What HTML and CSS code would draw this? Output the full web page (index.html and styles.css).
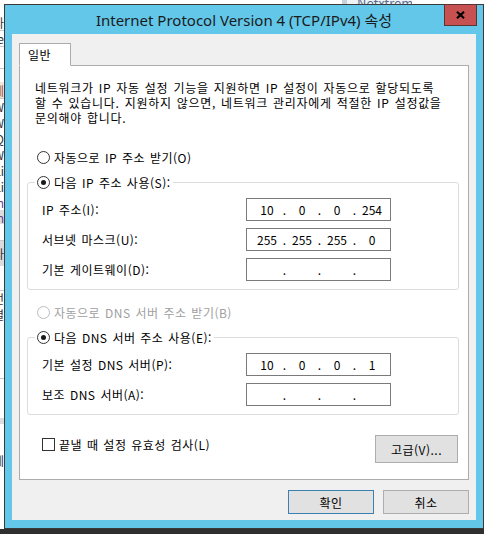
FILE: index.html
```html
<!DOCTYPE html>
<html lang="ko">

<head>
    <meta charset="UTF-8">
    <meta name="viewport" content="width=device-width, initial-scale=1.0">
    <title>Internet Protocol Version 4 (TCP/IPv4) 속성</title>
    <link rel="stylesheet" href="styles.css">
</head>

<body>
    <div class="screen">
        <!-- bits of the windows behind the dialog -->
        <div class="desk-top">
            <span class="desk-gap"></span>
            <span class="desk-chip">Netxtrem</span>
        </div>
        <div class="desk-left">
            <div class="frag h14"></div>
            <div class="frag h16">사</div>
            <div class="frag h16 line">re</div>
            <div class="frag h22 line"></div>
            <div class="frag h14 line"></div>
            <div class="frag h16 brown">세</div>
            <div class="frag h16 line">W</div>
            <div class="frag h16">W</div>
            <div class="frag h16">Q</div>
            <div class="frag h16">W</div>
            <div class="frag h16">Li</div>
            <div class="frag h16">Li</div>
            <div class="frag h16 purple">m</div>
            <div class="frag h14 grey purple">m</div>
            <div class="frag h16"></div>
            <div class="frag h26 grey line">사</div>
            <div class="frag h24"></div>
            <div class="frag h16 line">전</div>
            <div class="frag h16">결</div>
            <div class="frag h56"></div>
            <div class="frag h40 line"></div>
            <div class="frag h6 grey"></div>
            <div class="frag h28"></div>
            <div class="frag h16">세</div>
        </div>

        <div class="window">
            <div class="titlebar">
                <span></span>
                <span class="title">Internet Protocol Version 4 (TCP/IPv4) 속성</span>
                <button class="close" type="button">
                    <svg width="9" height="8" viewBox="0 0 9 8">
                        <path d="M1 0.8 L8 7.2 M8 0.8 L1 7.2" stroke="#000" stroke-width="2.2" fill="none" />
                    </svg>
                </button>
            </div>

            <div class="client">
                <div class="tabs">
                    <div class="tab">일반</div>
                </div>

                <div class="panel">
                    <p class="intro">
                        네트워크가 IP 자동 설정 기능을 지원하면 IP 설정이 자동으로 할당되도록<br>
                        할 수 있습니다. 지원하지 않으면, 네트워크 관리자에게 적절한 IP 설정값을<br>
                        문의해야 합니다.
                    </p>

                    <div class="option first">
                        <span class="radio"></span>
                        <span>자동으로 IP 주소 받기(O)</span>
                    </div>

                    <fieldset class="group">
                        <legend class="option">
                            <span class="radio checked"></span>
                            <span>다음 IP 주소 사용(S):</span>
                        </legend>
                        <div class="row">
                            <span>IP 주소(I):</span>
                            <div class="ip">
                                <span>10</span><i>.</i><span>0</span><i>.</i><span>0</span><i>.</i><span>254</span>
                            </div>
                        </div>
                        <div class="row">
                            <span>서브넷 마스크(U):</span>
                            <div class="ip">
                                <span>255</span><i>.</i><span>255</span><i>.</i><span>255</span><i>.</i><span>0</span>
                            </div>
                        </div>
                        <div class="row">
                            <span>기본 게이트웨이(D):</span>
                            <div class="ip">
                                <span></span><i>.</i><span></span><i>.</i><span></span><i>.</i><span></span>
                            </div>
                        </div>
                    </fieldset>

                    <div class="option disabled">
                        <span class="radio"></span>
                        <span>자동으로 DNS 서버 주소 받기(B)</span>
                    </div>

                    <fieldset class="group">
                        <legend class="option">
                            <span class="radio checked"></span>
                            <span>다음 DNS 서버 주소 사용(E):</span>
                        </legend>
                        <div class="row">
                            <span>기본 설정 DNS 서버(P):</span>
                            <div class="ip">
                                <span>10</span><i>.</i><span>0</span><i>.</i><span>0</span><i>.</i><span>1</span>
                            </div>
                        </div>
                        <div class="row">
                            <span>보조 DNS 서버(A):</span>
                            <div class="ip">
                                <span></span><i>.</i><span></span><i>.</i><span></span><i>.</i><span></span>
                            </div>
                        </div>
                    </fieldset>

                    <div class="footer">
                        <div class="check-item">
                            <span class="checkbox"></span>
                            <span>끝낼 때 설정 유효성 검사(L)</span>
                        </div>
                        <button class="btn advanced" type="button">고급(V)...</button>
                    </div>
                </div>

                <div class="actions">
                    <button class="btn default" type="button">확인</button>
                    <button class="btn" type="button">취소</button>
                </div>
            </div>
        </div>

        <div class="taskbar"></div>
    </div>
</body>

</html>
```

FILE: styles.css
```css
/* Reset */
* {
    margin: 0;
    padding: 0;
    box-sizing: border-box;
}

body {
    font-family: "Noto Sans CJK KR", "Noto Sans", sans-serif;
    font-size: 12px;
    letter-spacing: 0.5px;
    word-spacing: 1px;
    color: #000;
    background: #fff;
    overflow: hidden;
}

/* Whole screenshot area */
.screen {
    display: grid;
    grid-template-columns: 4px 480px;
    grid-template-rows: 4px 525px 5px;
    width: 484px;
    height: 534px;
}

/* Desktop behind the dialog */
.desk-top {
    grid-column: 2;
    grid-row: 1;
    display: flex;
    overflow: hidden;
    background: #fff;
}

.desk-gap {
    width: 338px;
}

.desk-chip {
    width: 70px;
    border-left: 5px solid #c8d0d8;
    padding-left: 10px;
    font-size: 13px;
    line-height: 6px;
    letter-spacing: 0;
    color: #5a6f8a;
    background: #eef3f8;
    overflow: hidden;
    white-space: nowrap;
}

.desk-left {
    grid-column: 1;
    grid-row: 1 / 3;
    display: flex;
    flex-direction: column;
    overflow: hidden;
    background: #fff;
}

.frag {
    display: flex;
    justify-content: flex-end;
    align-items: center;
    flex-shrink: 0;
    overflow: hidden;
    white-space: nowrap;
    font-size: 12px;
    letter-spacing: 0;
    color: #333;
}

.frag.line {
    border-top: 1px solid #c8c8c8;
}

.frag.grey {
    background: #dcdcdc;
}

.frag.brown {
    color: #a0522d;
    background: #f3e6d8;
}

.frag.purple {
    color: #6a3d8a;
}

.h6 { height: 6px; }
.h14 { height: 14px; }
.h16 { height: 16px; }
.h22 { height: 22px; }
.h24 { height: 24px; }
.h26 { height: 26px; }
.h28 { height: 28px; }
.h40 { height: 40px; }
.h56 { height: 56px; }

.taskbar {
    grid-column: 1 / 3;
    grid-row: 3;
    background: #2f2f2f;
}

/* Dialog window */
.window {
    grid-column: 2;
    grid-row: 2;
    display: flex;
    flex-direction: column;
    border: 1px solid #3a3a3a;
    background: #63c7e9;
    padding: 0 7px 8px 7px;
}

.titlebar {
    height: 29px;
    display: grid;
    grid-template-columns: 1fr auto 1fr;
    align-items: center;
}

.title {
    font-family: "Noto Sans", "Noto Sans CJK KR", sans-serif;
    font-size: 15px;
    letter-spacing: 0;
    word-spacing: 0;
    color: #1b1b1b;
    white-space: nowrap;
}

.close {
    justify-self: end;
    align-self: start;
    width: 33px;
    height: 22px;
    margin-top: -1px;
    margin-right: -1px;
    border: 1px solid #5b3333;
    background: #c75050;
    display: flex;
    align-items: center;
    justify-content: center;
}

/* Client area */
.client {
    flex: 1;
    background: #f0f0f0;
    padding: 9px 7px 6px 7px;
    display: flex;
    flex-direction: column;
}

.tabs {
    display: flex;
}

.tab {
    position: relative;
    z-index: 1;
    width: 52px;
    height: 23px;
    margin-bottom: -1px;
    padding: 3px 0 0 8px;
    background: #fff;
    border: 1px solid #acacac;
    border-bottom: 1px solid #fff;
    line-height: 15px;
}

.panel {
    height: 415px;
    background: #fff;
    border: 1px solid #acacac;
    padding: 14px 9px 0 7px;
    line-height: 15px;
}

.intro {
    padding-left: 8px;
    letter-spacing: 0.7px;
    white-space: nowrap;
}

/* Radio rows */
.option {
    display: flex;
    align-items: center;
    gap: 4px;
    height: 15px;
    padding-left: 10px;
    white-space: nowrap;
}

.option.first {
    margin-top: 25px;
}

.option.disabled {
    margin-top: 15px;
    color: #a0a0a0;
}

.radio {
    width: 13px;
    height: 13px;
    border: 1px solid #333;
    border-radius: 50%;
    background: #fff;
    display: flex;
    align-items: center;
    justify-content: center;
    flex-shrink: 0;
}

.radio.checked::after {
    content: "";
    width: 5px;
    height: 5px;
    border-radius: 50%;
    background: #1a1a1a;
}

.disabled .radio {
    border-color: #bcbcbc;
}

/* Group boxes */
.group {
    margin-top: 10px;
    border: 1px solid #dcdcdc;
    border-radius: 3px;
    padding: 8px 67px 8px 14px;
    display: flex;
    flex-direction: column;
    gap: 7px;
}

.group legend.option {
    margin-left: -7px;
    padding: 0 2px;
    gap: 4px;
}

.row {
    display: flex;
    align-items: center;
    justify-content: space-between;
}

.ip {
    width: 145px;
    height: 23px;
    border: 1px solid #7a7a7a;
    background: #fff;
    padding-left: 5px;
    letter-spacing: 0;
    display: grid;
    grid-template-columns: 30px 5px 30px 5px 30px 5px 30px;
    align-items: center;
    text-align: center;
}

.ip i {
    font-style: normal;
}

/* Bottom of the tab page */
.footer {
    display: flex;
    justify-content: space-between;
    align-items: flex-start;
    margin-top: 20px;
    padding: 0 1px 0 15px;
}

.check-item {
    display: flex;
    align-items: center;
    gap: 4px;
    margin-top: 2px;
    white-space: nowrap;
}

.checkbox {
    width: 13px;
    height: 13px;
    border: 1px solid #333;
    background: #fff;
}

.btn {
    font-family: "Noto Sans CJK KR", "Noto Sans", sans-serif;
    font-size: 12px;
    letter-spacing: 0.5px;
    color: #000;
    background: #e1e1e1;
    border: 1px solid #adadad;
    width: 86px;
    height: 24px;
}

.btn.advanced {
    width: 83px;
    height: 28px;
}

.btn.default {
    border-color: #3c7fb1;
}

.actions {
    display: flex;
    justify-content: flex-end;
    gap: 9px;
    margin-top: 10px;
}
```
